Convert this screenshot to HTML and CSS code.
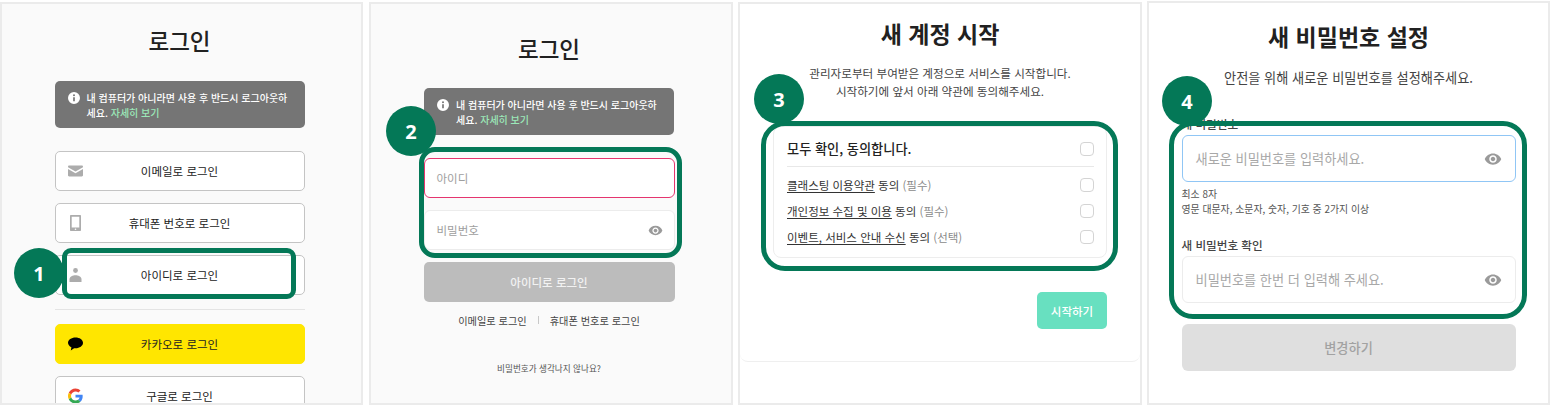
FILE: index.html
```
<!DOCTYPE html>
<html lang="ko">
<head>
<meta charset="utf-8">
<title>로그인 안내</title>
<link rel="stylesheet" href="styles.css">
</head>
<body>
<svg class="defs" width="0" height="0" aria-hidden="true">
  <symbol id="eye" viewBox="0 0 24 24"><path d="M12 4.5C7 4.5 2.73 7.61 1 12c1.73 4.39 6 7.5 11 7.5s9.27-3.11 11-7.5c-1.73-4.39-6-7.5-11-7.5zM12 17c-2.76 0-5-2.24-5-5s2.24-5 5-5 5 2.24 5 5-2.24 5-5 5zm0-8c-1.66 0-3 1.34-3 3s1.34 3 3 3 3-1.34 3-3-1.34-3-3-3z"/></symbol>
  <symbol id="info" viewBox="0 0 24 24"><path d="M12 0a12 12 0 1 0 0 24 12 12 0 0 0 0-24zm1.7 18.5h-3.4v-8.2h3.4zM12 8.6a2 2 0 1 1 0-4 2 2 0 0 1 0 4z"/></symbol>
</svg>
<main class="page">
  <section class="panel panel-grey p1">
    <h1 class="title t-login">로그인</h1>
    <div class="alert"><svg class="alert-icon"><use href="#info"/></svg><p>내 컴퓨터가 아니라면 사용 후 반드시 로그아웃하세요. <a>자세히 보기</a></p></div>
    <div class="btn-list btn-list-top">
      <div class="btn"><svg class="btn-icon" viewBox="0 0 15 11"><path class="ic" d="M1.2 0h12.6c.7 0 1.2.5 1.2 1.2v.5L7.5 6 0 1.7v-.5C0 .5.5 0 1.2 0zM0 3.4l7.5 4.3L15 3.4v6.4c0 .7-.5 1.2-1.2 1.2H1.2C.5 11 0 10.500 0 9.800z"/></svg><span>이메일로 로그인</span></div>
      <div class="btn"><svg class="btn-icon" viewBox="0 0 15 16"><path class="ic" fill-rule="evenodd" d="M3 0h9c.6 0 1 .4 1 1v14c0 .6-.4 1-1 1H3c-.6 0-1-.4-1-1V1c0-.6.4-1 1-1zm.7 1.800v10.600h7.600V1.800z"/><circle cx="7.500" cy="14.200" r=".8" fill="#fff"/></svg><span>휴대폰 번호로 로그인</span></div>
      <div class="btn"><svg class="btn-icon" viewBox="0 0 15 14"><circle class="ic" cx="7.500" cy="2.500" r="2.400"/><path class="ic" d="M1.500 14v-2.800c0-2.600 3.500-4 6-4s6 1.400 6 4V14z"/></svg><span>아이디로 로그인</span></div>
    </div>
    <hr class="rule">
    <div class="btn-list">
      <div class="btn btn-kakao"><svg class="btn-icon" viewBox="0 0 15 13"><path fill="#000" d="M7.500 0C3.400 0 0 2.400 0 5.300c0 1.900 1.400 3.500 3.400 4.500L2.800 13l3.300-2.300c.5.100.9.100 1.400.100 4.100 0 7.500-2.400 7.500-5.500S11.600 0 7.500 0z"/></svg><span>카카오로 로그인</span></div>
      <div class="btn"><svg class="btn-icon" viewBox="0 0 48 48"><path fill="#EA4335" d="M24 9.500c3.540 0 6.710 1.220 9.210 3.600l6.850-6.850C35.900 2.380 30.470 0 24 0 14.620 0 6.510 5.380 2.560 13.220l7.980 6.190C12.430 13.720 17.740 9.500 24 9.500z"/><path fill="#4285F4" d="M46.980 24.550c0-1.570-.15-3.090-.38-4.550H24v9.020h12.940c-.58 2.960-2.260 5.480-4.780 7.180l7.730 6c4.510-4.180 7.090-10.360 7.090-17.650z"/><path fill="#FBBC05" d="M10.530 28.590c-.48-1.450-.76-2.990-.76-4.590s.27-3.140.76-4.590l-7.980-6.190C.92 16.460 0 20.120 0 24c0 3.880.92 7.540 2.560 10.780l7.970-6.190z"/><path fill="#34A853" d="M24 48c6.480 0 11.930-2.130 15.890-5.810l-7.730-6c-2.150 1.450-4.920 2.300-8.160 2.300-6.260 0-11.570-4.220-13.470-9.910l-7.980 6.190C6.510 42.620 14.620 48 24 48z"/></svg><span>구글로 로그인</span></div>
    </div>
    <div class="ring ring1"></div>
    <div class="badge badge1">1</div>
  </section>

  <section class="panel panel-grey p2">
    <h1 class="title t-login">로그인</h1>
    <div class="alert"><svg class="alert-icon"><use href="#info"/></svg><p>내 컴퓨터가 아니라면 사용 후 반드시 로그아웃하세요. <a>자세히 보기</a></p></div>
    <div class="field-list">
      <div class="field field-error"><span>아이디</span></div>
      <div class="field"><span>비밀번호</span><svg class="eye"><use href="#eye"/></svg></div>
      <div class="btn btn-disabled">아이디로 로그인</div>
    </div>
    <div class="links"><span>이메일로 로그인</span><i></i><span>휴대폰 번호로 로그인</span></div>
    <p class="forgot">비밀번호가 생각나지 않나요?</p>
    <div class="ring ring2"></div>
    <div class="badge badge2">2</div>
  </section>

  <section class="panel p3">
    <div class="inner">
      <h1 class="title t-big t3">새 계정 시작</h1>
      <p class="desc">관리자로부터 부여받은 계정으로 서비스를 시작합니다.<br>시작하기에 앞서 아래 약관에 동의해주세요.</p>
      <div class="terms">
        <div class="term term-all"><strong>모두 확인, 동의합니다.</strong><b class="check"></b></div>
        <div class="term"><span><u>클래스팅 이용약관</u> 동의 <em>(필수)</em></span><b class="check"></b></div>
        <div class="term"><span><u>개인정보 수집 및 이용</u> 동의 <em>(필수)</em></span><b class="check"></b></div>
        <div class="term"><span><u>이벤트, 서비스 안내 수신</u> 동의 <em>(선택)</em></span><b class="check"></b></div>
      </div>
      <div class="actions"><div class="start">시작하기</div></div>
    </div>
    <div class="ring ring3"></div>
    <div class="badge badge3">3</div>
  </section>

  <section class="panel p4">
    <h1 class="title t-big t4">새 비밀번호 설정</h1>
    <p class="desc desc4">안전을 위해 새로운 비밀번호를 설정해주세요.</p>
    <div class="form">
      <label class="label">새 비밀번호</label>
      <div class="input input-focus"><span>새로운 비밀번호를 입력하세요.</span><svg class="eye"><use href="#eye"/></svg></div>
      <p class="help">최소 8자<br>영문 대문자, 소문자, 숫자, 기호 중 2가지 이상</p>
      <label class="label label2">새 비밀번호 확인</label>
      <div class="input"><span>비밀번호를 한번 더 입력해 주세요.</span><svg class="eye"><use href="#eye"/></svg></div>
      <div class="change">변경하기</div>
    </div>
    <div class="ring ring4"></div>
    <div class="badge badge4">4</div>
  </section>
</main>
</body>
</html>
```
FILE: styles.css
```
* { box-sizing: border-box; margin: 0; padding: 0; }
html, body { height: 406px; overflow: hidden; background: #fff; }
body { font-family: "Noto Sans CJK KR", "Noto Sans", sans-serif; color: #222; }
.defs { position: absolute; }
.page { display: flex; height: 406px; padding-top: 1px; }

.panel { position: relative; height: 404px; border: 2px solid #ebebeb; background: #fff; overflow: hidden; display: flex; flex-direction: column; align-items: center; flex: none; }
.panel-grey { background: #fafafa; padding-right: 4px; }
.p1 { width: 363px; margin: 1px 6px 0 0; height: 403px; }
.p2 { width: 364px; margin: 1px 5px 0 0; height: 403px; }
.p3 { width: 404px; margin: 1px 5px 0 0; height: 403px; }
.p4 { width: 403px; }

.title { font-weight: 500; color: #212121; line-height: 32px; white-space: nowrap; }
.t-login { font-size: 22.5px; }
.p1 .title { margin-top: 20px; }
.p2 .title { margin-top: 28px; }
.t-big { font-size: 23px; font-weight: 700; }
.t3 { margin-top: 13px; }
.t4 { margin-top: 17px; }

.alert { display: flex; align-items: flex-start; gap: 7px; width: 250px; height: 47px; padding: 9px 12px 9px 13px; border-radius: 5px; background: #757575; color: #fff; font-size: 10px; line-height: 15px; font-weight: 500; }
.p1 .alert { margin-top: 25px; }
.p2 .alert { margin-top: 24px; }
.alert p { flex: 1; }
.alert a { color: #9be8b8; }
.alert-icon { width: 12px; height: 12px; margin-top: 2px; flex: none; fill: #fff; }

.btn-list { display: flex; flex-direction: column; gap: 12px; width: 250px; }
.btn-list-top { margin-top: 23px; }
.btn { display: grid; grid-template-columns: 1fr auto 1fr; align-items: center; height: 40px; padding: 0 12px; border: 1px solid #c4c4c4; border-radius: 5px; background: #fff; color: #222; font-size: 11.500px; font-weight: 400; }
.btn span { grid-column: 2; }
.btn-icon { width: 15px; height: 16px; grid-column: 1; grid-row: 1; }
.ic { fill: #acacac; }
.btn-kakao { background: #ffe600; border-color: #ffe600; }
.rule { width: 250px; height: 1px; margin: 14px 0 14px; border: 0; background: #e4e4e4; flex: none; }

.field-list { display: flex; flex-direction: column; gap: 12px; width: 251px; margin-top: 23px; }
.field { display: flex; align-items: center; justify-content: space-between; height: 40px; padding: 0 11px 0 12px; border: 1px solid #ececec; border-radius: 6px; background: #fff; color: #9e9e9e; font-size: 11.500px; }
.field-error { border-color: #e5356f; }
.eye { width: 15px; height: 15px; fill: #9a9a9a; flex: none; }
.btn-disabled { display: flex; justify-content: center; border: 0; background: #bcbcbc; color: #f2f2f2; font-weight: 500; }

.links { display: flex; align-items: center; gap: 11px; margin-top: 9px; height: 18px; font-size: 10.200px; font-weight: 400; color: #444; }
.links i { width: 1px; height: 8px; background: #c8c8c8; }
.forgot { margin-top: 32px; font-size: 8.600px; font-weight: 400; color: #555; line-height: 14px; }

.inner { display: flex; flex-direction: column; align-items: center; width: 100%; height: 358px; border-bottom: 1px solid #efefef; border-radius: 0 0 8px 8px; flex: none; }
.desc { margin-top: 15px; text-align: center; font-size: 11.600px; line-height: 18px; color: #444; }
.terms { width: 334px; height: 132px; margin-top: 26px; padding: 4px 12px 0 13px; border: 1px solid #ededed; border-radius: 8px; display: flex; flex-direction: column; flex: none; }
.term { display: flex; align-items: center; justify-content: space-between; height: 26px; font-size: 11.500px; color: #333; flex: none; }
.term-all { height: 36px; margin-bottom: 5px; border-bottom: 1px solid #e8e8e8; font-size: 13.200px; }
.term-all strong { font-weight: 500; color: #222; }
.term u { text-underline-offset: 2px; }
.term em { font-style: normal; color: #8a8a8a; }
.check { display: block; width: 14px; height: 14px; border: 1px solid #d4d4d4; border-radius: 4px; background: #fff; }
.actions { display: flex; justify-content: flex-end; width: 334px; margin-top: 34px; }
.start { display: flex; align-items: center; justify-content: center; width: 70px; height: 37px; border-radius: 5px; background: #68e0c0; color: #fff; font-size: 11.500px; font-weight: 500; }

.desc4 { margin-top: 16px; font-size: 13.200px; line-height: 20px; }
.form { display: flex; flex-direction: column; width: 334px; margin-top: 28px; flex: none; }
.label { font-size: 11.600px; line-height: 16px; font-weight: 500; color: #444; }
.input { display: flex; align-items: center; justify-content: space-between; height: 47px; margin-top: 3px; padding: 0 14px 0 13px; border: 1px solid #ececec; border-radius: 6px; background: #fff; color: #a8a8a8; font-size: 13.200px; flex: none; }
.input-focus { border-color: #90c6f5; }
.input .eye { width: 18px; height: 18px; margin-right: -1px; }
.help { margin-top: 5px; font-size: 9.900px; line-height: 15px; color: #555; font-weight: 400; }
.label2 { margin-top: 20px; }
.change { display: flex; align-items: center; justify-content: center; height: 47px; margin-top: 21px; border-radius: 6px; background: #dfdfdf; color: #a2a2a2; font-size: 13.200px; font-weight: 500; flex: none; }

.ring { position: absolute; border: 5px solid #047857; background: transparent; pointer-events: none; }
.badge { position: absolute; display: flex; align-items: center; justify-content: center; width: 50px; height: 50px; border-radius: 50%; background: #047857; color: #fff; font-family: "Noto Sans", sans-serif; font-size: 20px; font-weight: 700; }
.ring1 { left: 60px; top: 244px; width: 234px; height: 51px; border-radius: 9px; }
.badge1 { left: 12px; top: 244px; }
.ring2 { left: 48px; top: 143px; width: 263px; height: 111px; border-radius: 16px; }
.badge2 { left: 15px; top: 102px; }
.ring3 { left: 21px; top: 117px; width: 357px; height: 150px; border-radius: 24px; }
.badge3 { left: 14px; top: 70px; }
.ring4 { left: 20px; top: 118px; width: 358px; height: 198px; border-radius: 24px; }
.badge4 { left: 13px; top: 73px; }
```
